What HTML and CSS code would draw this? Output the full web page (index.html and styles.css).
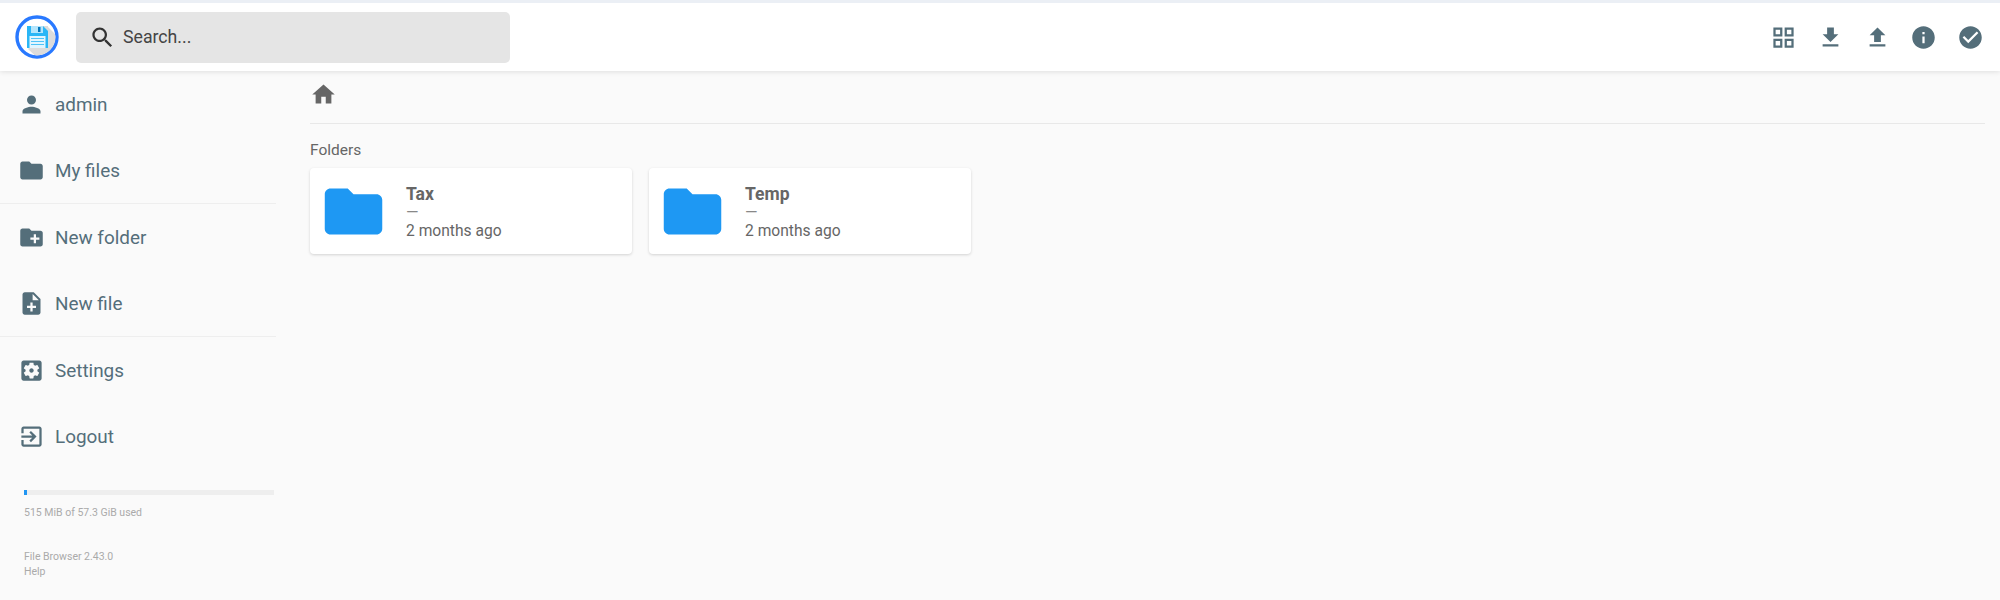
FILE: index.html
```html
<!DOCTYPE html>
<html lang="en">
<head>
<meta charset="utf-8">
<title>File Browser</title>
<link rel="stylesheet" href="styles.css">
</head>
<body>
<header class="topbar">
  <svg class="logo" viewBox="0 0 44 44">
    <defs><clipPath id="disc"><circle cx="22" cy="22" r="18.5"/></clipPath></defs>
    <circle cx="22" cy="22" r="20" fill="#fff" stroke="#2979ff" stroke-width="3.4"/>
    <polygon clip-path="url(#disc)" points="33,12 50,29 50,50 30,50 13,34" fill="#dcdcdc"/>
    <rect x="12" y="11" width="21" height="22" fill="#29b6f6"/>
    <polygon points="33,11 33,16 28,11" fill="#dcdcdc"/>
    <rect x="16" y="11" width="12" height="7" fill="#b3e5fc"/>
    <rect x="23" y="12" width="2.5" height="5" fill="#0277bd"/>
    <rect x="14.5" y="21" width="16" height="12" fill="#e1f5fe"/>
    <path d="M16 23.5h13M16 26.5h13M16 29.5h13" stroke="#4fc3f7" stroke-width="1"/>
  </svg>
  <div class="search">
    <svg class="search-icon" viewBox="0 0 24 24"><path d="M15.5 14h-.79l-.28-.27C15.41 12.59 16 11.11 16 9.5 16 5.91 13.09 3 9.5 3S3 5.91 3 9.5 5.91 16 9.5 16c1.61 0 3.09-.59 4.23-1.57l.27.28v.79l5 4.99L20.49 19l-4.99-5zm-6 0C7.01 14 5 11.99 5 9.5S7.01 5 9.5 5 14 7.01 14 9.5 11.99 14 9.5 14z"/></svg>
    <span>Search...</span>
  </div>
  <nav class="actions">
    <svg class="action" viewBox="0 0 24 24"><path d="M3 3v8h8V3H3zm6 6H5V5h4v4zm-6 4v8h8v-8H3zm6 6H5v-4h4v4zm4-16v8h8V3h-8zm6 6h-4V5h4v4zm-6 4v8h8v-8h-8zm6 6h-4v-4h4v4z"/></svg>
    <svg class="action" viewBox="0 0 24 24"><path d="M19 9h-4V3H9v6H5l7 7 7-7zM5 18v2h14v-2H5z"/></svg>
    <svg class="action" viewBox="0 0 24 24"><path d="M9 16h6v-6h4l-7-7-7 7h4zm-4 2h14v2H5z"/></svg>
    <svg class="action" viewBox="0 0 24 24"><path d="M12 2C6.48 2 2 6.48 2 12s4.48 10 10 10 10-4.48 10-10S17.52 2 12 2zm1 15h-2v-6h2v6zm0-8h-2V7h2v2z"/></svg>
    <svg class="action" viewBox="0 0 24 24"><path d="M12 2C6.48 2 2 6.48 2 12s4.48 10 10 10 10-4.48 10-10S17.52 2 12 2zm-2 15l-5-5 1.41-1.41L10 14.17l7.59-7.59L19 8l-9 9z"/></svg>
  </nav>
</header>
<div class="layout">
  <aside class="sidebar">
    <a class="item"><svg class="item-icon" viewBox="0 0 24 24"><path d="M12 12c2.21 0 4-1.79 4-4s-1.79-4-4-4-4 1.79-4 4 1.79 4 4 4zm0 2c-2.67 0-8 1.34-8 4v2h16v-2c0-2.66-5.33-4-8-4z"/></svg><span>admin</span></a>
    <a class="item"><svg class="item-icon" viewBox="0 0 24 24"><path d="M10 4H4c-1.1 0-1.99.9-1.99 2L2 18c0 1.1.9 2 2 2h16c1.1 0 2-.9 2-2V8c0-1.1-.9-2-2-2h-8l-2-2z"/></svg><span>My files</span></a>
    <hr class="rule">
    <a class="item"><svg class="item-icon" viewBox="0 0 24 24"><path d="M20 6h-8l-2-2H4c-1.11 0-1.99.89-1.99 2L2 18c0 1.11.89 2 2 2h16c1.11 0 2-.89 2-2V8c0-1.11-.89-2-2-2zm-1 8h-3v3h-2v-3h-3v-2h3V9h2v3h3v2z"/></svg><span>New folder</span></a>
    <a class="item"><svg class="item-icon" viewBox="0 0 24 24"><path d="M14 2H6c-1.1 0-1.99.9-1.99 2L4 20c0 1.1.89 2 1.99 2H18c1.1 0 2-.9 2-2V8l-6-6zm2 14h-3v3h-2v-3H8v-2h3v-3h2v3h3v2zm-3-7V3.5L18.5 9H13z"/></svg><span>New file</span></a>
    <hr class="rule">
    <a class="item"><svg class="item-icon" viewBox="0 0 24 24"><path d="M12 10c-1.1 0-2 .9-2 2s.9 2 2 2 2-.9 2-2-.9-2-2-2zm7-7H5c-1.11 0-2 .9-2 2v14c0 1.1.89 2 2 2h14c1.11 0 2-.9 2-2V5c0-1.1-.89-2-2-2zm-1.75 9c0 .23-.02.46-.05.68l1.48 1.16c.13.11.17.3.08.45l-1.4 2.42c-.09.15-.27.21-.43.15l-1.74-.7c-.36.28-.76.51-1.18.69l-.26 1.85c-.03.17-.18.3-.35.3h-2.8c-.17 0-.32-.13-.35-.29l-.26-1.85c-.43-.18-.82-.41-1.18-.69l-1.74.7c-.16.06-.34 0-.43-.15l-1.4-2.42c-.09-.15-.05-.34.08-.45l1.48-1.16c-.03-.23-.05-.46-.05-.69 0-.23.02-.46.05-.68l-1.48-1.16c-.13-.11-.17-.3-.08-.45l1.4-2.42c.09-.15.27-.21.43-.15l1.74.7c.36-.28.76-.51 1.18-.69l.26-1.85c.03-.17.18-.3.35-.3h2.8c.17 0 .32.13.35.29l.26 1.85c.43.18.82.41 1.18.69l1.74-.7c.16-.06.34 0 .43.15l1.4 2.42c.09.15.05.34-.08.45l-1.48 1.16c.03.23.05.46.05.69z"/></svg><span>Settings</span></a>
    <a class="item"><svg class="item-icon" viewBox="0 0 24 24"><path d="M10.09 15.59L11.5 17l5-5-5-5-1.41 1.41L12.67 11H3v2h9.67l-2.58 2.59zM19 3H5c-1.11 0-2 .9-2 2v4h2V5h14v14H5v-4H3v4c0 1.1.89 2 2 2h14c1.1 0 2-.9 2-2V5c0-1.1-.9-2-2-2z"/></svg><span>Logout</span></a>
    <div class="usage">
      <div class="bar"><div class="bar-fill"></div></div>
      <div class="usage-text">515 MiB of 57.3 GiB used</div>
    </div>
    <div class="credits">
      <div>File Browser 2.43.0</div>
      <div>Help</div>
    </div>
  </aside>
  <main class="content">
    <div class="crumbs">
      <svg class="home" viewBox="0 0 24 24"><path d="M10 20v-6h4v6h5v-8h3L12 3 2 12h3v8z"/></svg>
    </div>
    <h2 class="section">Folders</h2>
    <div class="cards">
      <article class="card">
        <svg class="folder" viewBox="0 0 24 24"><path d="M10 4H4c-1.1 0-1.99.9-1.99 2L2 18c0 1.1.9 2 2 2h16c1.1 0 2-.9 2-2V8c0-1.1-.9-2-2-2h-8l-2-2z"/></svg>
        <div class="meta"><div class="name">Tax</div><div class="size">—</div><div class="date">2 months ago</div></div>
      </article>
      <article class="card">
        <svg class="folder" viewBox="0 0 24 24"><path d="M10 4H4c-1.1 0-1.99.9-1.99 2L2 18c0 1.1.9 2 2 2h16c1.1 0 2-.9 2-2V8c0-1.1-.9-2-2-2h-8l-2-2z"/></svg>
        <div class="meta"><div class="name">Temp</div><div class="size">—</div><div class="date">2 months ago</div></div>
      </article>
    </div>
  </main>
</div>
</body>
</html>
```
FILE: styles.css
```css
* { box-sizing: border-box; }
html, body { height: 100%; }
body {
  margin: 0;
  height: 600px;
  overflow: hidden;
  background: #fafafa;
  font-family: Roboto, "Liberation Sans", sans-serif;
  color: #666;
  display: flex;
  flex-direction: column;
  border-top: 3px solid #ebeff5;
}
.topbar {
  height: 68px;
  flex: none;
  background: #fff;
  display: flex;
  align-items: center;
  padding: 0 16px 0 15px;
  box-shadow: 0 1px 5px rgba(0,0,0,.11);
  position: relative;
  z-index: 1;
}
.logo { width: 44px; height: 44px; flex: none; margin-bottom: 1px; }
.search {
  margin-left: 17px;
  width: 434px;
  height: 51px;
  background: #e5e5e5;
  border-radius: 5px;
  display: flex;
  align-items: center;
  padding-left: 13px;
  font-size: 17.7px;
  color: #444;
}
.search-icon { width: 27px; height: 27px; fill: #333; margin-right: 7px; }
.actions { margin-left: auto; display: flex; gap: 19.75px; }
.action { width: 27px; height: 27px; fill: #546e7a; }
.layout { flex: 1; display: flex; min-height: 0; }
.sidebar { width: 276px; flex: none; display: flex; flex-direction: column; }
.item {
  height: 66px;
  display: flex;
  align-items: center;
  padding-left: 18px;
  font-size: 18.9px;
  color: #546e7a;
}
.item-icon { width: 27px; height: 27px; fill: #546e7a; margin-right: 10px; flex: none; }
.rule { width: 100%; height: 1px; margin: 0; border: 0; background: #eee; }
.usage { margin: 21px 0 0 24px; }
.bar { height: 5px; width: 250px; background: #eee; }
.bar-fill { width: 3px; height: 5px; background: #2196f3; }
.usage-text { margin-top: 11px; font-size: 10.5px; color: #aaa; }
.credits { margin: 30px 0 0 24px; font-size: 10.5px; line-height: 15px; color: #aaa; }
.content { flex: 1; padding: 0 15px 0 34px; min-width: 0; }
.crumbs { height: 53px; border-bottom: 1px solid #e8e8e8; padding: 10px 0 0 0; }
.home { display: block; width: 27px; height: 27px; fill: #666; }
.section { margin: 17px 0 9px; font-size: 15.5px; line-height: 18px; font-weight: 400; color: #666; }
.cards { display: flex; gap: 17px; }
.card {
  width: 322px;
  height: 86px;
  background: #fff;
  border-radius: 4px;
  box-shadow: 0 1px 3px rgba(0,0,0,.16);
  display: flex;
  align-items: center;
  padding-left: 9px;
}
.folder { width: 69px; height: 69px; fill: #1e98f3; flex: none; }
.meta { margin-left: 18px; padding-top: 2px; }
.name { font-size: 17.5px; line-height: 20px; font-weight: 700; color: #666; }
.size { font-size: 16px; line-height: 17px; color: #888; }
.date { font-size: 15.6px; line-height: 20px; color: #666; }
```
